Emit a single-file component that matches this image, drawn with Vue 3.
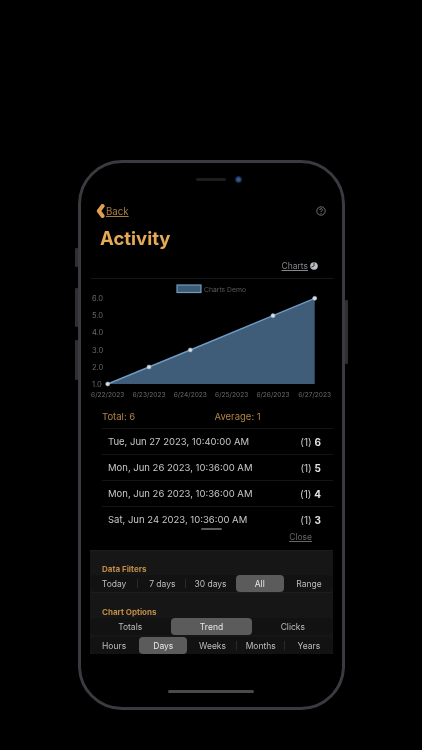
<template>
  <div class="page">
    <div class="phone">
      <span class="side-btn mute"></span>
      <span class="side-btn vol-up"></span>
      <span class="side-btn vol-down"></span>
      <span class="side-btn power"></span>

      <div class="sensors">
        <span class="speaker"></span>
        <span class="camera"></span>
      </div>

      <div class="topbar">
        <a class="back">
          <svg class="back-icon" width="9" height="14" viewBox="0 0 9 14">
            <path d="M6.6 2 L2.8 7 L6.6 12" fill="none" stroke="#e0a050" stroke-width="4" stroke-linecap="round" stroke-linejoin="round" />
          </svg>
          <span>Back</span>
        </a>
        <svg width="10" height="10" viewBox="0 0 10 10" class="help">
          <circle cx="5" cy="5" r="4.2" fill="none" stroke="#8a8a8a" stroke-width="0.8" />
          <path d="M3.8 4 A1.25 1.25 0 1 1 5.5 5.1 Q5 5.4 5 6" fill="none" stroke="#8a8a8a" stroke-width="0.8" />
          <circle cx="5" cy="7.3" r="0.5" fill="#8a8a8a" />
        </svg>
      </div>

      <h1 class="title">Activity</h1>

      <div class="charts-link">
        <span>Charts</span>
        <svg width="8" height="8" viewBox="0 0 8 8">
          <circle cx="4" cy="4" r="3.8" fill="#b9c0c6" />
          <path d="M4 4 L4 0.6 M4 4 L1.4 5.2" stroke="#33383d" stroke-width="1" fill="none" />
        </svg>
      </div>

      <svg class="chart" width="243" height="122" viewBox="0 0 243 122">
        <rect x="86" y="6" width="24" height="7.5" fill="#3d5a74" stroke="#6d9cc4" stroke-width="1.2" />
        <text x="113" y="12.5" class="legend">Charts Demo</text>
        <text v-for="t in yTicks" :key="t.label" x="1" :y="t.y" class="tick">{{ t.label }}</text>
        <polygon :points="areaPoints" fill="#3f5d78" />
        <polyline :points="linePoints" fill="none" stroke="#6d9cc4" stroke-width="1.4" />
        <circle v-for="p in points" :key="p[0]" :cx="p[0]" :cy="p[1]" r="2.1" fill="#d8dce0" stroke="#8fa9bf" stroke-width="0.5" />
        <text v-for="d in xTicks" :key="d.label" :x="d.x" y="118" text-anchor="middle" class="tick date">{{ d.label }}</text>
      </svg>

      <div class="totals">
        <span class="total">Total: 6</span>
        <span class="average">Average: 1</span>
      </div>

      <ul class="rows">
        <li v-for="row in rows" :key="row.n" class="row">
          <span>{{ row.date }}</span>
          <span class="count">(1) <b>{{ row.n }}</b></span>
        </li>
      </ul>

      <span class="handle"></span>
      <a class="close">Close</a>

      <section class="panel">
        <div class="group">
          <h2 class="label">Data Filters</h2>
          <div class="segments">
            <span v-for="(o, i) in filters" :key="o" class="seg" :class="segClass(filters, i, 'All')">{{ o }}</span>
          </div>
        </div>
        <div class="group second">
          <h2 class="label">Chart Options</h2>
          <div class="segments">
            <span v-for="o in modes" :key="o" class="seg" :class="{ on: o === 'Trend' }">{{ o }}</span>
          </div>
          <div class="segments units">
            <span v-for="(o, i) in units" :key="o" class="seg" :class="segClass(units, i, 'Days')">{{ o }}</span>
          </div>
        </div>
      </section>

      <span class="home"></span>
    </div>
  </div>
</template>

<script setup>
const yTicks = [
  { label: '6.0', y: 21.5 },
  { label: '5.0', y: 38.5 },
  { label: '4.0', y: 56 },
  { label: '3.0', y: 73.5 },
  { label: '2.0', y: 90.5 },
  { label: '1.0', y: 107.5 },
]

const points = [
  [16.7, 105],
  [58, 88],
  [99.3, 71],
  [182, 36.7],
  [223.7, 19.3],
]

const linePoints = points.map((p) => p.join(',')).join(' ')
const areaPoints = `${linePoints} 223.7,105`

const xTicks = [
  { label: '6/22/2023', x: 16.7 },
  { label: '6/23/2023', x: 58 },
  { label: '6/24/2023', x: 99.3 },
  { label: '6/25/2023', x: 140.7 },
  { label: '6/26/2023', x: 182 },
  { label: '6/27/2023', x: 223.7 },
]

const rows = [
  { date: 'Tue, Jun 27 2023, 10:40:00 AM', n: 6 },
  { date: 'Mon, Jun 26 2023, 10:36:00 AM', n: 5 },
  { date: 'Mon, Jun 26 2023, 10:36:00 AM', n: 4 },
  { date: 'Sat, Jun 24 2023, 10:36:00 AM', n: 3 },
]

const filters = ['Today', '7 days', '30 days', 'All', 'Range']
const modes = ['Totals', 'Trend', 'Clicks']
const units = ['Hours', 'Days', 'Weeks', 'Months', 'Years']

// iOS style segmented control: no divider touching the selected item
function segClass(list, i, active) {
  const last = i === list.length - 1
  return {
    on: list[i] === active,
    sep: !last && list[i] !== active && list[i + 1] !== active,
  }
}
</script>

<style>
html,
body {
  background: #000;
}
</style>

<style scoped>
.page {
  width: 422px;
  height: 750px;
  background: #000;
  padding-top: 160px;
  box-sizing: border-box;
  overflow: hidden;
  font-family: Inter, "Liberation Sans", sans-serif;
}

.phone {
  position: relative;
  width: 267px;
  height: 550px;
  margin: 0 auto;
  box-sizing: border-box;
  border: 3px solid #3a3a40;
  border-radius: 44px;
  background: #000;
  padding: 0 10px;
  display: flex;
  flex-direction: column;
  will-change: transform;
}

.side-btn {
  position: absolute;
  width: 3px;
  background: #2e2e33;
  border-radius: 1px;
}
.mute { left: -6px; top: 85px; height: 19px; }
.vol-up { left: -6px; top: 125px; height: 39px; }
.vol-down { left: -6px; top: 177px; height: 40px; }
.power { right: -6px; top: 137px; height: 64px; }

.sensors {
  height: 14px;
  margin-top: 9px;
  padding-left: 15px;
  display: flex;
  align-items: center;
  justify-content: center;
  gap: 9px;
}
.speaker {
  width: 30px;
  height: 3px;
  border-radius: 2px;
  background: #1d1d1f;
}
.camera {
  width: 7px;
  height: 7px;
  border-radius: 50%;
  background: radial-gradient(circle, #2f5a94 0 25%, #141c2c 70%);
}

.topbar {
  display: flex;
  justify-content: space-between;
  align-items: center;
  margin-top: 17px;
  height: 16px;
  padding: 0 6.5px 0 5px;
}
.back {
  display: flex;
  align-items: center;
  gap: 1px;
  color: #a87b42;
  font-size: 9.7px;
  text-decoration: underline;
}

.title {
  margin: 7px 0 0 9px;
  font-size: 18.5px;
  line-height: 24px;
  font-weight: 700;
  color: #e6a957;
}

.charts-link {
  display: flex;
  justify-content: flex-end;
  align-items: center;
  gap: 2px;
  margin-top: 10px;
  padding-right: 14px;
  height: 12px;
  font-size: 8.5px;
  color: #85858a;
  text-decoration: underline;
}

.chart {
  display: block;
  flex: none;
  margin-top: 6px;
  border-top: 1px solid #161616;
  box-sizing: content-box;
}
.legend {
  font-size: 6.8px;
  fill: #5c5c5c;
  font-family: Inter, "Liberation Sans", sans-serif;
}
.tick {
  font-size: 7.5px;
  fill: #6a6a6a;
  font-family: Inter, "Liberation Sans", sans-serif;
}
.date {
  font-size: 6.6px;
}

.totals {
  display: flex;
  margin-top: 9px;
  padding-left: 11px;
  font-size: 9.5px;
  line-height: 14px;
  color: #b08444;
}
.total {
  width: 112.5px;
}

.rows {
  list-style: none;
  margin: 4px 0 0 11px;
  padding: 0;
  width: 231px;
}
.row {
  display: flex;
  justify-content: space-between;
  align-items: center;
  height: 25px;
  padding: 0 12px 0 6px;
  border-top: 1px solid #151515;
  font-size: 9.5px;
  color: #c8c8c8;
}
.count {
  font-size: 10px;
}
.row b {
  font-weight: 700;
  color: #e4e4e4;
}

.handle {
  align-self: center;
  width: 21px;
  height: 2px;
  margin-top: -4px;
  border-radius: 1px;
  background: #5a5a5a;
}
.close {
  align-self: flex-end;
  margin: 1px 20px 0 0;
  font-size: 8.5px;
  line-height: 12px;
  color: #66666a;
  text-decoration: underline;
}

.panel {
  margin: 7px 0 0 -1px;
  width: 243px;
  background: #161616;
}
.group {
  border-top: 1px solid #1c1c1c;
}
.label {
  margin: 0;
  padding: 12px 0 0 12px;
  font-size: 8px;
  line-height: 12px;
  font-weight: 700;
  color: #c08c48;
}
.second .label {
  padding-top: 13px;
}

.segments {
  display: flex;
  height: 17px;
  border-radius: 5px;
  background: #121212;
}
.units {
  margin-top: 2px;
}
.seg {
  position: relative;
  flex: 1;
  display: flex;
  align-items: center;
  justify-content: center;
  border-radius: 4px;
  font-size: 8.5px;
  color: #bdbdbd;
}
.seg.on {
  margin: 0 1px;
  background: #5b5b5b;
  color: #e8e8e8;
}
.seg.sep::after {
  content: "";
  position: absolute;
  right: 0;
  top: 4px;
  bottom: 4px;
  width: 1px;
  background: #2a2a2a;
}

.home {
  position: absolute;
  left: 87px;
  bottom: 14px;
  width: 86px;
  height: 3px;
  border-radius: 2px;
  background: #4a4a4a;
}
</style>
